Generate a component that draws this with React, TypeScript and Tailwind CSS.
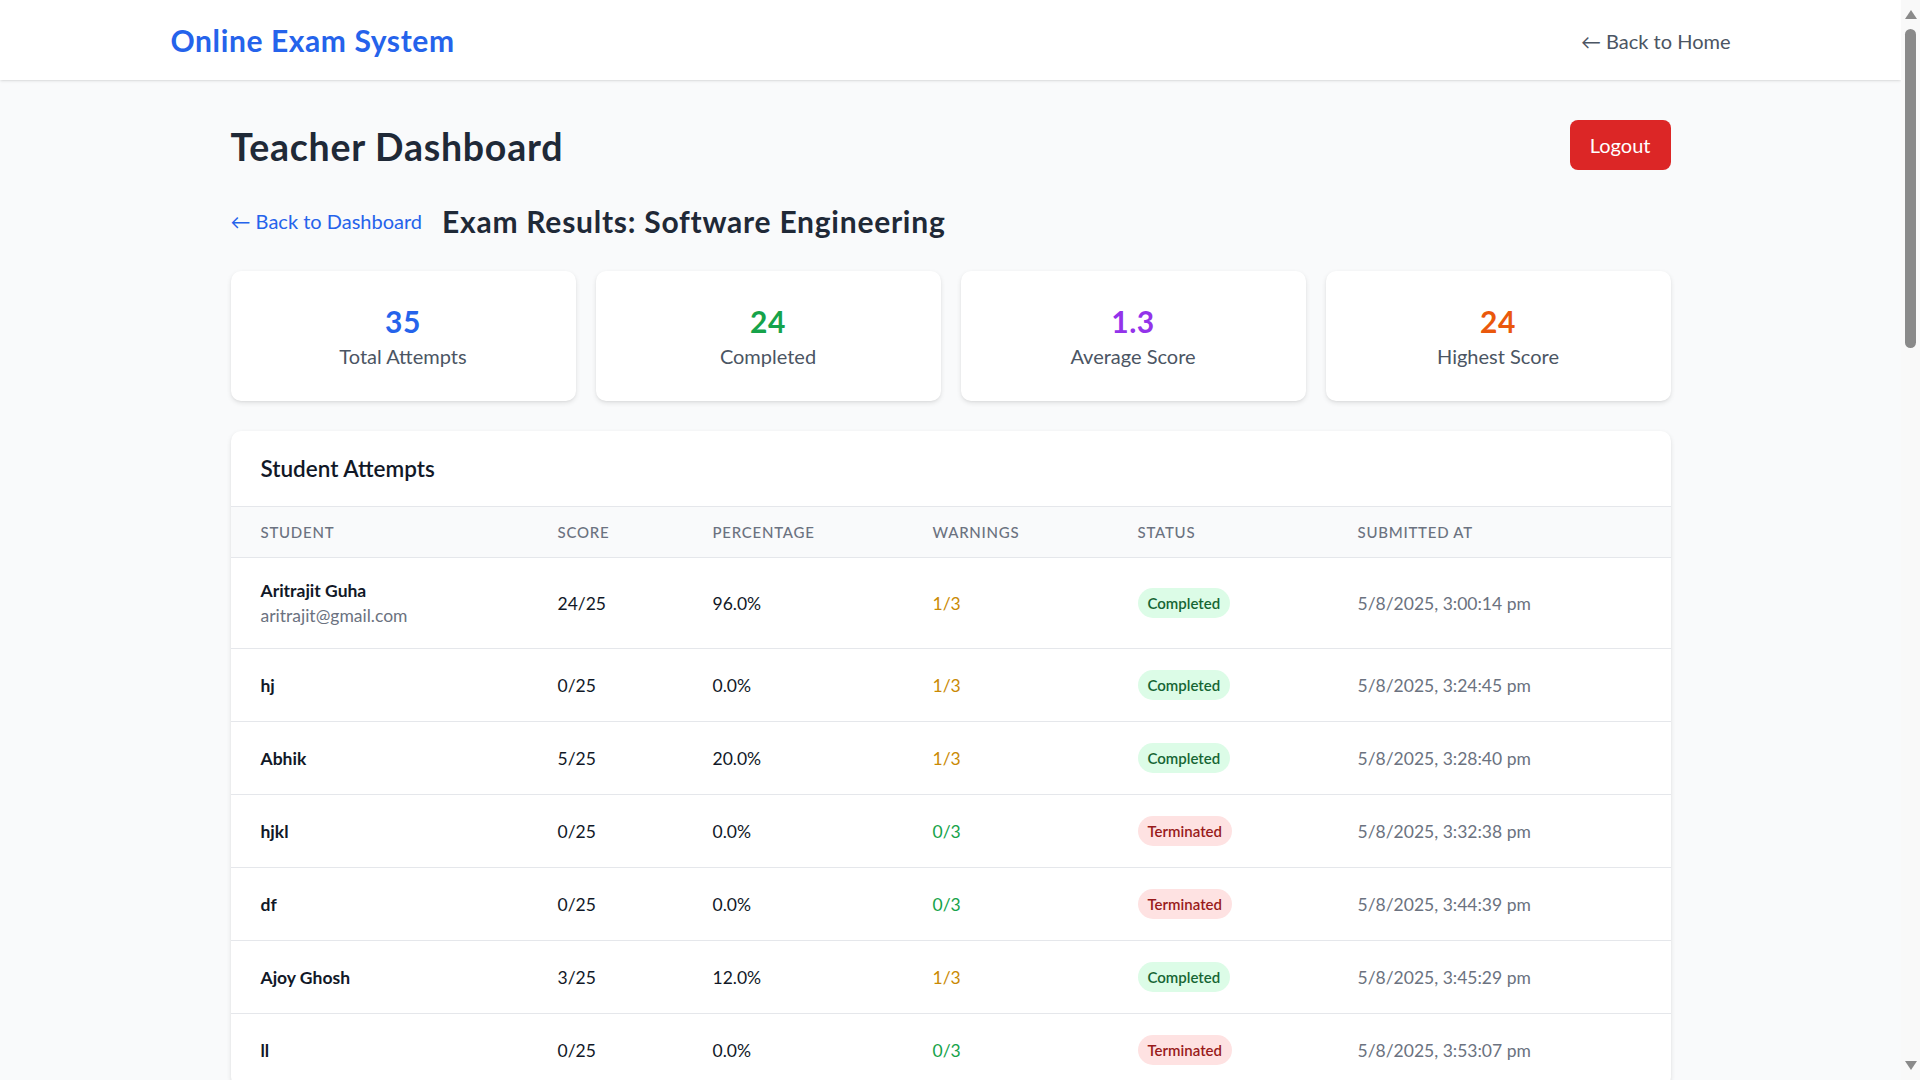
type Attempt = {
  name: string;
  email?: string;
  score: string;
  pct: string;
  warnings: number;
  status: 'Completed' | 'Terminated';
  at: string;
};

const attempts: Attempt[] = [
  { name: 'Aritrajit Guha', email: 'aritrajit@gmail.com', score: '24/25', pct: '96.0%', warnings: 1, status: 'Completed', at: '5/8/2025, 3:00:14 pm' },
  { name: 'hj', score: '0/25', pct: '0.0%', warnings: 1, status: 'Completed', at: '5/8/2025, 3:24:45 pm' },
  { name: 'Abhik', score: '5/25', pct: '20.0%', warnings: 1, status: 'Completed', at: '5/8/2025, 3:28:40 pm' },
  { name: 'hjkl', score: '0/25', pct: '0.0%', warnings: 0, status: 'Terminated', at: '5/8/2025, 3:32:38 pm' },
  { name: 'df', score: '0/25', pct: '0.0%', warnings: 0, status: 'Terminated', at: '5/8/2025, 3:44:39 pm' },
  { name: 'Ajoy Ghosh', score: '3/25', pct: '12.0%', warnings: 1, status: 'Completed', at: '5/8/2025, 3:45:29 pm' },
  { name: 'll', score: '0/25', pct: '0.0%', warnings: 0, status: 'Terminated', at: '5/8/2025, 3:53:07 pm' },
];

const stats = [
  { value: '35', label: 'Total Attempts', color: 'text-[#2563eb]' },
  { value: '24', label: 'Completed', color: 'text-[#16a34a]' },
  { value: '1.3', label: 'Average Score', color: 'text-[#9333ea]' },
  { value: '24', label: 'Highest Score', color: 'text-[#ea580c]' },
];

const columns = [
  { title: 'Student', width: 'w-[297px]' },
  { title: 'Score', width: 'w-[155px]' },
  { title: 'Percentage', width: 'w-[220px]' },
  { title: 'Warnings', width: 'w-[205px]' },
  { title: 'Status', width: 'w-[220px]' },
  { title: 'Submitted At', width: '' },
];

// the browser's own scrollbar, as it shows in the screenshot
function Scrollbar() {
  return (
    <aside className="sticky top-0 flex h-screen w-[19px] shrink-0 flex-col items-center bg-[#f9f9f9]">
      <div className="mt-[10px] h-0 w-0 border-x-[6px] border-b-[9px] border-x-transparent border-b-[#8a8a8a]" />
      <div className="mt-[10px] h-[319px] w-[11px] rounded-full bg-[#8a8a8a]" />
      <div className="mt-auto mb-[10px] h-0 w-0 border-x-[6px] border-t-[9px] border-x-transparent border-t-[#8a8a8a]" />
    </aside>
  );
}

export default function App() {
  return (
    <div className="flex min-h-screen bg-[#f9fafb] font-['Lato',sans-serif] text-[#111827]">
      <div className="min-w-0 flex-1">
        {/* Top bar */}
        <nav className="bg-white shadow-[0_1px_3px_0_rgba(0,0,0,0.1),0_1px_2px_-1px_rgba(0,0,0,0.1)]">
          <div className="mx-auto flex h-[80px] max-w-[1600px] items-center justify-between px-[20px]">
            <a href="#" className="pt-[1px] text-[30px] font-bold tracking-[0.02em] text-[#2563eb]">
              Online Exam System
            </a>
            <a href="#" className="pt-[1px] text-[20px] text-[#4b5563]">
              ← Back to Home
            </a>
          </div>
        </nav>

        <main className="mx-auto max-w-[1536px] px-[48px] py-[40px]">
          <div className="mb-[30px] flex items-center justify-between">
            <h1 className="pt-[2px] text-[37.5px] font-bold leading-[45px] tracking-[0.02em] text-[#1f2937]">
              Teacher Dashboard
            </h1>
            <button className="rounded-[8px] bg-[#dc2626] px-[20px] py-[10px] text-[20px] leading-[30px] text-white">
              Logout
            </button>
          </div>

          <div className="mb-[30px] flex items-center">
            <a href="#" className="mr-[20px] pt-[1px] text-[20px] leading-[30px] text-[#2563eb]">
              ← Back to Dashboard
            </a>
            <h2 className="pt-[1px] text-[30px] font-bold leading-[40px] tracking-[0.025em] text-[#1f2937]">
              Exam Results: Software Engineering
            </h2>
          </div>

          <div className="mb-[30px] grid grid-cols-4 gap-[20px]">
            {stats.map((s) => (
              <div
                key={s.label}
                className="rounded-[10px] bg-white p-[30px] text-center shadow-[0_2px_5px_0_rgba(0,0,0,0.1),0_1px_3px_-1px_rgba(0,0,0,0.08)]"
              >
                <div className={`text-[30px] font-bold leading-[40px] tracking-[0.02em] ${s.color}`}>{s.value}</div>
                <div className="text-[20px] leading-[30px] text-[#4b5563]">{s.label}</div>
              </div>
            ))}
          </div>

          <div className="overflow-hidden rounded-[10px] bg-white shadow-[0_2px_5px_0_rgba(0,0,0,0.1),0_1px_3px_-1px_rgba(0,0,0,0.08)]">
            <div className="border-b border-[#e5e7eb] px-[30px] py-[20px]">
              <h3 className="text-[22.5px] font-semibold leading-[35px] text-[#111827]">Student Attempts</h3>
            </div>
            <table className="w-full table-fixed">
              <thead className="bg-[#f9fafb]">
                <tr>
                  {columns.map((c) => (
                    <th
                      key={c.title}
                      className={`${c.width} px-[30px] py-[15px] text-left text-[15px] font-medium uppercase leading-[20px] tracking-wider text-[#6b7280]`}
                    >
                      {c.title}
                    </th>
                  ))}
                </tr>
              </thead>
              <tbody className="divide-y divide-[#e5e7eb] border-t border-[#e5e7eb]">
                {attempts.map((a) => (
                  <tr key={a.name + a.at}>
                    <td className="h-[73px] px-[30px] py-[20px] whitespace-nowrap">
                      <div className="text-[17.5px] font-bold leading-[25px] text-[#111827]">{a.name}</div>
                      {a.email && <div className="text-[17.5px] leading-[25px] text-[#6b7280]">{a.email}</div>}
                    </td>
                    <td className="px-[30px] py-[20px] text-[17.5px] leading-[25px] text-[#111827]">{a.score}</td>
                    <td className="px-[30px] py-[20px] text-[17.5px] leading-[25px] text-[#111827]">{a.pct}</td>
                    <td
                      className={`px-[30px] py-[20px] text-[17.5px] leading-[25px] ${
                        a.warnings > 0 ? 'text-[#ca8a04]' : 'text-[#16a34a]'
                      }`}
                    >
                      {a.warnings}/3
                    </td>
                    <td className="px-[30px] py-[20px] text-[17.5px] leading-[25px]">
                      <span
                        className={`inline-block rounded-full px-[10px] py-[5px] text-[15px] font-semibold leading-[20px] ${
                          a.status === 'Completed' ? 'bg-[#dcfce7] text-[#166534]' : 'bg-[#fee2e2] text-[#991b1b]'
                        }`}
                      >
                        {a.status}
                      </span>
                    </td>
                    <td className="px-[30px] py-[20px] whitespace-nowrap text-[17.5px] leading-[25px] text-[#6b7280]">
                      {a.at}
                    </td>
                  </tr>
                ))}
              </tbody>
            </table>
          </div>
        </main>
      </div>
      <Scrollbar />
    </div>
  );
}
